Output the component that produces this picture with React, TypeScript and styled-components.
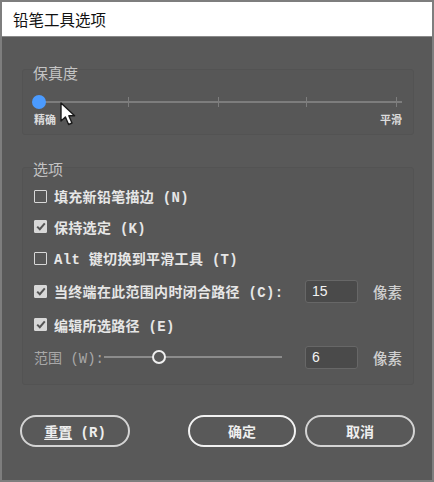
import React from "react";
import styled, { createGlobalStyle } from "styled-components";

const Global = createGlobalStyle`
  html, body { margin: 0; padding: 0; background: #595959; }
  * { box-sizing: border-box; }
`;

const Window = styled.div`
  position: relative;
  width: 434px;
  height: 482px;
  border: 2px solid #7e7e7e;
  background: #595959;
  display: flex;
  flex-direction: column;
  font-family: "Liberation Mono", "Noto Sans CJK SC", monospace;
`;

const TitleBar = styled.div`
  height: 35px;
  background: #ffffff;
  border-bottom: 1px solid #8a8a8a;
  display: flex;
  align-items: center;
  padding-left: 11px;
  font-family: "Noto Sans CJK SC", sans-serif;
  font-size: 15.5px;
  color: #111;
`;

const Body = styled.div`
  flex: 1;
  padding: 22px 18px 0 20px;
  display: flex;
  flex-direction: column;
`;

const Group = styled.div<{ $mb: number }>`
  display: flex;
  flex-direction: column;
  margin-bottom: ${(p) => p.$mb}px;
`;

const GroupTitle = styled.div<{ $pt: number }>`
  height: ${(p) => 18 + p.$pt}px;
  padding: ${(p) => p.$pt}px 0 0 11px;
  font-family: "Noto Sans CJK SC", sans-serif;
  font-size: 15px;
  line-height: 18px;
  color: #c4c4c4;
  position: relative;
  z-index: 1;
`;

const GroupBox = styled.div<{ $h: number; $mt: number }>`
  margin-top: ${(p) => -p.$mt}px;
  height: ${(p) => p.$h}px;
  border: 1px solid #535353;
  border-radius: 3px;
  background: #575757;
  padding: 0 11px;
  display: flex;
  flex-direction: column;
`;

const Fidelity = styled.div`
  margin-top: 25px;
  display: flex;
  flex-direction: column;
`;

const TrackWrap = styled.div`
  position: relative;
  height: 14px;
`;

const Track = styled.div`
  position: absolute;
  left: 5px;
  right: 0;
  top: 6px;
  height: 2px;
  background: #7d7d7d;
`;

const Tick = styled.div`
  position: absolute;
  top: 2px;
  width: 1px;
  height: 10px;
  background: #7d7d7d;
`;

const BlueKnob = styled.div`
  position: absolute;
  left: -2px;
  top: 0;
  width: 14px;
  height: 14px;
  border-radius: 50%;
  background: #4b9bff;
`;

const EndLabels = styled.div`
  display: flex;
  justify-content: space-between;
  margin-top: 3px;
  font-family: "Noto Sans CJK SC", sans-serif;
  font-weight: 700;
  font-size: 11px;
  color: #dcdcdc;
  line-height: 14px;
`;

const Rows = styled.div`
  display: flex;
  flex-direction: column;
  padding-top: 13px;
`;

const Row = styled.div<{ $h: number }>`
  height: ${(p) => p.$h}px;
  display: flex;
  align-items: center;
  gap: 7px;
  font-size: 14px;
  font-weight: 700;
  color: #e6e6e6;
  white-space: nowrap;
  & > * {
    flex: none;
  }
`;

const Box = styled.div<{ $on?: boolean }>`
  width: 13px;
  height: 13px;
  border: 1.5px solid #d8d8d8;
  border-radius: 1px;
  background: ${(p) => (p.$on ? "#d8d8d8" : "transparent")};
  display: flex;
  align-items: center;
  justify-content: center;
`;

const Label = styled.span`
  && {
    flex: 1;
  }
  letter-spacing: 0.3px;
`;

const Field = styled.div`
  width: 53px;
  height: 23px;
  border: 1px solid #676767;
  border-radius: 3px;
  background: #4a4a4a;
  color: #f2f2f2;
  font-family: "Liberation Sans", sans-serif;
  font-weight: 400;
  font-size: 14px;
  padding: 1px 0 0 6px;
  line-height: 18px;
`;

const Unit = styled.span`
  width: 37px;
  text-align: right;
  font-family: "Noto Sans CJK SC", sans-serif;
  font-weight: 500;
  font-size: 14.5px;
  color: #cfcfcf;
`;

const RangeLabel = styled.span`
  color: #a8a8a8;
  font-weight: 400;
  width: 63px;
`;

const MiniTrack = styled.div`
  position: relative;
  width: 178px;
  height: 14px;
  margin-right: 16px;
  &::before {
    content: "";
    position: absolute;
    left: 0;
    right: 0;
    top: 6px;
    height: 1.5px;
    background: #8c8c8c;
  }
`;

const RingKnob = styled.div`
  position: absolute;
  top: 0;
  width: 14px;
  height: 14px;
  border-radius: 50%;
  border: 2.5px solid #efefef;
  background: #595959;
`;

const Buttons = styled.div`
  display: flex;
  margin-left: -2px;
`;

const Button = styled.div<{ $primary?: boolean; $w: number; $ml: number }>`
  flex: none;
  width: ${(p) => p.$w}px;
  margin-left: ${(p) => p.$ml}px;
  height: 32px;
  border-radius: 16px;
  border: ${(p) => (p.$primary ? "2.5px solid #f2f2f2" : "2px solid #d4d4d4")};
  display: flex;
  align-items: center;
  justify-content: center;
  font-size: 14px;
  font-weight: 700;
  color: #eeeeee;
  font-family: "Liberation Mono", "Noto Sans CJK SC", monospace;
`;

const U = styled.span`
  text-decoration: underline;
  text-underline-offset: 2px;
`;

const Cursor = styled.svg`
  position: absolute;
  left: 58px;
  top: 100px;
`;

const Check = () => (
  <svg width="10" height="9" viewBox="0 0 10 9">
    <path d="M1.2 4.6 L3.8 7.2 L8.8 1.4" fill="none" stroke="#555" strokeWidth="2" />
  </svg>
);

export default function App() {
  const ticks = [94, 184, 272, 362];
  return (
    <>
      <Global />
      <Window>
        <TitleBar>铅笔工具选项</TitleBar>
        <Body>
          <Group $mb={22}>
            <GroupTitle $pt={5}>保真度</GroupTitle>
            <GroupBox $h={66} $mt={13}>
              <Fidelity>
                <TrackWrap>
                  <Track />
                  {ticks.map((t) => (
                    <Tick key={t} style={{ left: t }} />
                  ))}
                  <BlueKnob />
                </TrackWrap>
                <EndLabels>
                  <span>精确</span>
                  <span>平滑</span>
                </EndLabels>
              </Fidelity>
            </GroupBox>
          </Group>
          <Group $mb={30}>
            <GroupTitle $pt={3}>选项</GroupTitle>
            <GroupBox $h={218} $mt={11}>
              <Rows>
                <Row $h={30}>
                  <Box />
                  <Label>填充新铅笔描边 (N)</Label>
                </Row>
                <Row $h={31}>
                  <Box $on>
                    <Check />
                  </Box>
                  <Label>保持选定 (K)</Label>
                </Row>
                <Row $h={32}>
                  <Box />
                  <Label>Alt 键切换到平滑工具 (T)</Label>
                </Row>
                <Row $h={34}>
                  <Box $on>
                    <Check />
                  </Box>
                  <Label>当终端在此范围内时闭合路径 (C):</Label>
                  <Field>15</Field>
                  <Unit>像素</Unit>
                </Row>
                <Row $h={33}>
                  <Box $on>
                    <Check />
                  </Box>
                  <Label>编辑所选路径 (E)</Label>
                </Row>
                <Row $h={32}>
                  <RangeLabel>范围 (W):</RangeLabel>
                  <MiniTrack>
                    <RingKnob style={{ left: 48 }} />
                  </MiniTrack>
                  <Field>6</Field>
                  <Unit>像素</Unit>
                </Row>
              </Rows>
            </GroupBox>
          </Group>
          <Buttons>
            <Button $w={110} $ml={0}>
              <span>
                <U>重置</U> (R)
              </span>
            </Button>
            <Button $primary $w={108} $ml={58}>
              确定
            </Button>
            <Button $w={110} $ml={9}>
              取消
            </Button>
          </Buttons>
        </Body>
        <Cursor width="18" height="25" viewBox="0 0 18 25">
          <path
            d="M1 1 L1 19 L5.4 15 L8.6 22.5 L12 21 L8.8 13.8 L14.6 13.8 Z"
            fill="#ffffff"
            stroke="#1a1a1a"
            strokeWidth="1.4"
            strokeLinejoin="round"
          />
        </Cursor>
      </Window>
    </>
  );
}
